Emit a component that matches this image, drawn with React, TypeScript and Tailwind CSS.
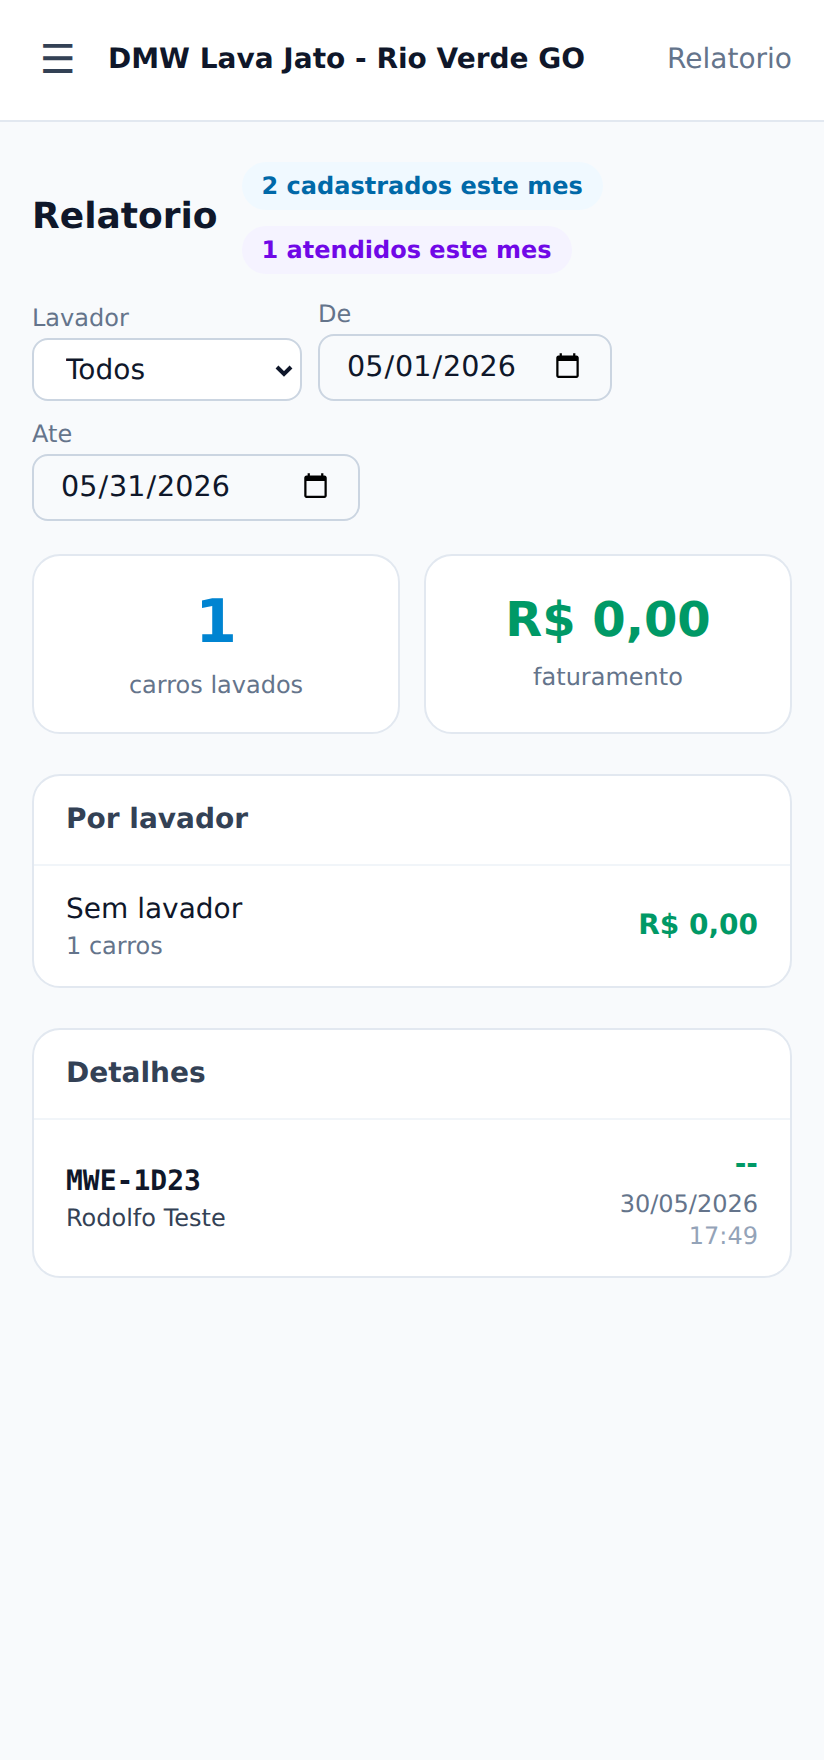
import React from "react";

function Field({ label, children }: { label: string; children: React.ReactNode }) {
  return (
    <label className="flex flex-col gap-[6px]">
      <span className="text-[24px] leading-[28px] text-[#64748b]">{label}</span>
      {children}
    </label>
  );
}

function DateInput({ value, width }: { value: string; width: string }) {
  return (
    <input
      type="date"
      defaultValue={value}
      className={`${width} h-[67px] rounded-[16px] border-2 border-[#cbd5e1] bg-[#f8fafc] px-[26px] pb-[2px] text-[28.6px] text-[#0f172a] [text-rendering:geometricPrecision]`}
    />
  );
}

export default function App() {
  return (
    <div className="min-h-[1760px] bg-[#f8fafc] font-['DejaVu_Sans',sans-serif] text-[#0f172a] [text-rendering:geometricPrecision]">
      <header className="flex h-[122px] items-center justify-between border-b-2 border-[#e2e8f0] bg-white px-[32px] pb-[2px]">
        <div className="flex items-center gap-[24px]">
          <button className="flex h-[44px] w-[52px] items-center justify-center text-[40px] leading-none text-[#334155]">☰</button>
          <span className="text-[28px] font-bold">DMW Lava Jato - Rio Verde GO</span>
        </div>
        <span className="text-[28px] text-[#64748b]">Relatorio</span>
      </header>

      <main className="flex flex-col px-[32px] pt-[40px]">
        <div className="flex items-center gap-[24px]">
          <h1 className="mb-[2px] text-[36px] font-bold">Relatorio</h1>
          <div className="flex flex-wrap gap-[16px]">
            <span className="rounded-[24px] bg-[#f0f9ff] px-[20px] py-[10px] text-[24px] leading-[28px] font-bold text-[#0069a8]">2 cadastrados este mes</span>
            <span className="rounded-[24px] bg-[#f5f3ff] px-[20px] py-[10px] text-[24px] leading-[28px] font-bold text-[#7008e7]">1 atendidos este mes</span>
          </div>
        </div>

        <div className="mt-[26px] flex flex-wrap items-end gap-x-[16px] gap-y-[19px]">
          <Field label="Lavador">
            <div className="relative">
              <select className="h-[63px] w-[270px] appearance-none rounded-[16px] border-2 border-[#cbd5e1] bg-white px-[32px] text-[28px] text-[#0f172a] [text-rendering:geometricPrecision]">
                <option>Todos</option>
              </select>
              <svg className="pointer-events-none absolute top-[26px] right-[8px]" width="20" height="14" viewBox="0 0 20 14" fill="none">
                <path d="M3 3l7 7 7-7" stroke="#0f172a" strokeWidth="4" />
              </svg>
            </div>
          </Field>
          <Field label="De">
            <DateInput value="2026-05-01" width="w-[294px]" />
          </Field>
          <Field label="Ate">
            <DateInput value="2026-05-31" width="w-[328px]" />
          </Field>
        </div>

        <div className="mt-[33px] grid grid-cols-2 gap-[24px]">
          <div className="h-[180px] rounded-[28px] border-2 border-[#e2e8f0] bg-white pt-[33px] text-center">
            <div className="text-[60px] leading-[66px] font-bold text-[#0084d1]">1</div>
            <div className="mt-[16px] text-[24px] leading-[28px] text-[#64748b]">carros lavados</div>
          </div>
          <div className="h-[180px] rounded-[28px] border-2 border-[#e2e8f0] bg-white pt-[31px] text-center">
            <div className="text-[48px] leading-[66px] font-bold text-[#009966]">R$ 0,00</div>
            <div className="mt-[10px] text-[24px] leading-[28px] text-[#64748b]">faturamento</div>
          </div>
        </div>

        <section className="mt-[40px] rounded-[28px] border-2 border-[#e2e8f0] bg-white">
          <h2 className="border-b-2 border-[#f1f5f9] px-[32px] pt-[23px] pb-[25px] text-[28px] leading-[40px] font-bold text-[#334155]">Por lavador</h2>
          <div className="flex items-center justify-between px-[32px] pt-[25px] pb-[26px]">
            <div>
              <div className="text-[28px] leading-[36px]">Sem lavador</div>
              <div className="mt-[5px] text-[24px] leading-[28px] text-[#64748b]">1 carros</div>
            </div>
            <div className="mb-[2px] text-[28px] font-bold text-[#009966]">R$ 0,00</div>
          </div>
        </section>

        <section className="mt-[40px] rounded-[28px] border-2 border-[#e2e8f0] bg-white">
          <h2 className="border-b-2 border-[#f1f5f9] px-[32px] pt-[23px] pb-[25px] text-[28px] leading-[40px] font-bold text-[#334155]">Detalhes</h2>
          <div className="flex items-center justify-between px-[32px] py-[24px]">
            <div>
              <div className="font-['DejaVu_Sans_Mono',monospace] text-[28px] leading-[34px] font-bold">MWE-1D23</div>
              <div className="mt-[5px] text-[24px] leading-[30px] text-[#334155]">Rodolfo Teste</div>
            </div>
            <div className="text-right">
              <div className="text-[28px] leading-[40px] font-bold text-[#009966]">--</div>
              <div className="mt-[4px] text-[24px] leading-[32px] text-[#64748b]">30/05/2026</div>
              <div className="text-[24px] leading-[32px] text-[#94a3b8]">17:49</div>
            </div>
          </div>
        </section>
      </main>
    </div>
  );
}
